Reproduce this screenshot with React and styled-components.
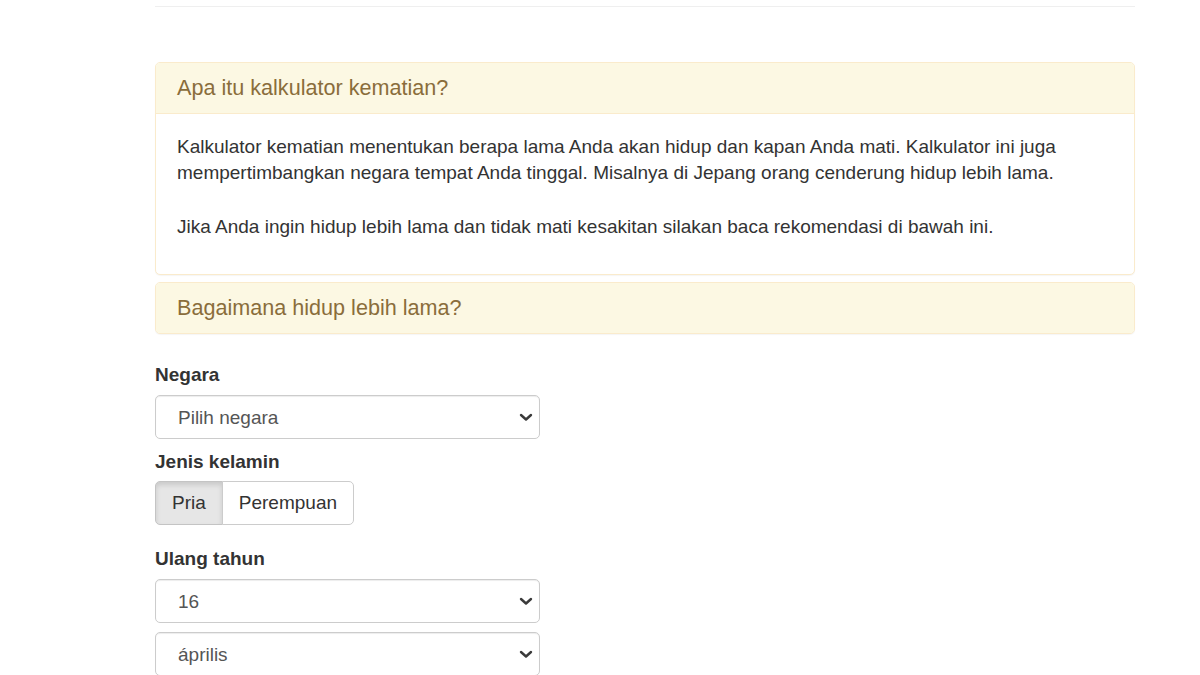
import React, { useState } from 'react';
import styled, { createGlobalStyle } from 'styled-components';

const GlobalStyle = createGlobalStyle`
  html, body { margin: 0; padding: 0; background: #fff; }
  body {
    font-family: 'Liberation Sans', Arial, sans-serif;
    font-size: 19px;
    line-height: 1.43;
    color: #333;
  }
  * { box-sizing: border-box; }
`;

const Page = styled.div`
  padding: 0 65px 0 155px;
`;

const TopRule = styled.div`
  height: 7px;
  border-bottom: 1px solid #efefef;
  margin-bottom: 55px;
`;

const Panel = styled.section`
  border: 1px solid #faebcc;
  border-radius: 5px;
  background: #fff;
  margin-bottom: ${p => p.$gap || 7}px;
  box-shadow: 0 1px 1px rgba(0, 0, 0, 0.04);
`;

const PanelHeading = styled.div`
  background: #fcf8e3;
  color: #8a6d3b;
  font-size: 21.6px;
  line-height: 24px;
  padding: 13px 21px 13px;
  border-radius: ${p => (p.$alone ? '4px' : '4px 4px 0 0')};
  border-bottom: ${p => (p.$alone ? 'none' : '1px solid #faebcc')};
`;

const PanelBody = styled.div`
  padding: 20px 21px 20px;
`;

const Para = styled.p`
  margin: 0 0 ${p => p.$after}px;
  line-height: 26px;
`;

const Label = styled.label`
  display: block;
  font-weight: 700;
  font-size: 19px;
  line-height: 25px;
  margin-bottom: ${p => p.$after || 8}px;
`;

const Field = styled.div`
  position: relative;
  width: 385px;
  margin-bottom: ${p => p.$after || 0}px;
`;

const Select = styled.select`
  appearance: none;
  -webkit-appearance: none;
  display: block;
  width: 100%;
  height: 44px;
  padding: 0 40px 0 22px;
  font-family: inherit;
  font-size: 19px;
  color: #555;
  background: #fff;
  border: 1px solid #ccc;
  border-radius: 5px;
  box-shadow: inset 0 1px 1px rgba(0, 0, 0, 0.075);
  outline: none;
`;

const Chevron = styled.svg`
  position: absolute;
  right: 7px;
  top: 50%;
  margin-top: -4px;
  pointer-events: none;
`;

const BtnGroup = styled.div`
  display: inline-flex;
  margin-bottom: ${p => p.$after || 0}px;
`;

const ToggleBtn = styled.button`
  height: 44px;
  padding: 0 16px;
  font-family: inherit;
  font-size: 19px;
  color: #333;
  cursor: pointer;
  background: ${p => (p.$active ? '#e6e6e6' : '#fff')};
  border: 1px solid ${p => (p.$active ? '#c4c4c4' : '#ccc')};
  box-shadow: ${p => (p.$active ? 'inset 0 3px 5px rgba(0,0,0,0.125)' : 'none')};
  &:first-child { border-radius: 5px 0 0 5px; }
  &:last-child { border-radius: 0 5px 5px 0; margin-left: -1px; }
  &:focus { outline: none; }
`;

function SelectField({ value, options, after }) {
  return (
    <Field $after={after}>
      <Select defaultValue={value}>
        {options.map(o => <option key={o}>{o}</option>)}
      </Select>
      <Chevron width="14" height="9" viewBox="0 0 14 9" fill="none">
        <path d="M2 2 L7 6.5 L12 2" stroke="#3a3a3a" strokeWidth="2.4" strokeLinecap="round" strokeLinejoin="round" />
      </Chevron>
    </Field>
  );
}

const days = Array.from({ length: 31 }, (_, i) => String(i + 1));
const months = ['január', 'február', 'március', 'április', 'május', 'június', 'július', 'augusztus', 'szeptember', 'október', 'november', 'december'];

export default function App() {
  const [gender, setGender] = useState('pria');

  return (
    <>
      <GlobalStyle />
      <Page>
        <TopRule />
        <Panel>
          <PanelHeading>Apa itu kalkulator kematian?</PanelHeading>
          <PanelBody>
            <Para $after={28}>
              Kalkulator kematian menentukan berapa lama Anda akan hidup dan kapan Anda mati. Kalkulator ini juga
              mempertimbangkan negara tempat Anda tinggal. Misalnya di Jepang orang cenderung hidup lebih lama.
            </Para>
            <Para $after={14}>
              Jika Anda ingin hidup lebih lama dan tidak mati kesakitan silakan baca rekomendasi di bawah ini.
            </Para>
          </PanelBody>
        </Panel>
        <Panel $gap={28}>
          <PanelHeading $alone>Bagaimana hidup lebih lama?</PanelHeading>
        </Panel>

        <Label $after={8}>Negara</Label>
        <SelectField value="Pilih negara" options={['Pilih negara', 'Indonesia', 'Jepang', 'Malaysia']} after={10} />

        <Label $after={7}>Jenis kelamin</Label>
        <BtnGroup $after={21}>
          <ToggleBtn $active={gender === 'pria'} onClick={() => setGender('pria')}>Pria</ToggleBtn>
          <ToggleBtn $active={gender === 'perempuan'} onClick={() => setGender('perempuan')}>Perempuan</ToggleBtn>
        </BtnGroup>

        <Label $after={8}>Ulang tahun</Label>
        <SelectField value="16" options={days} after={9} />
        <SelectField value="április" options={months} />
      </Page>
    </>
  );
}
